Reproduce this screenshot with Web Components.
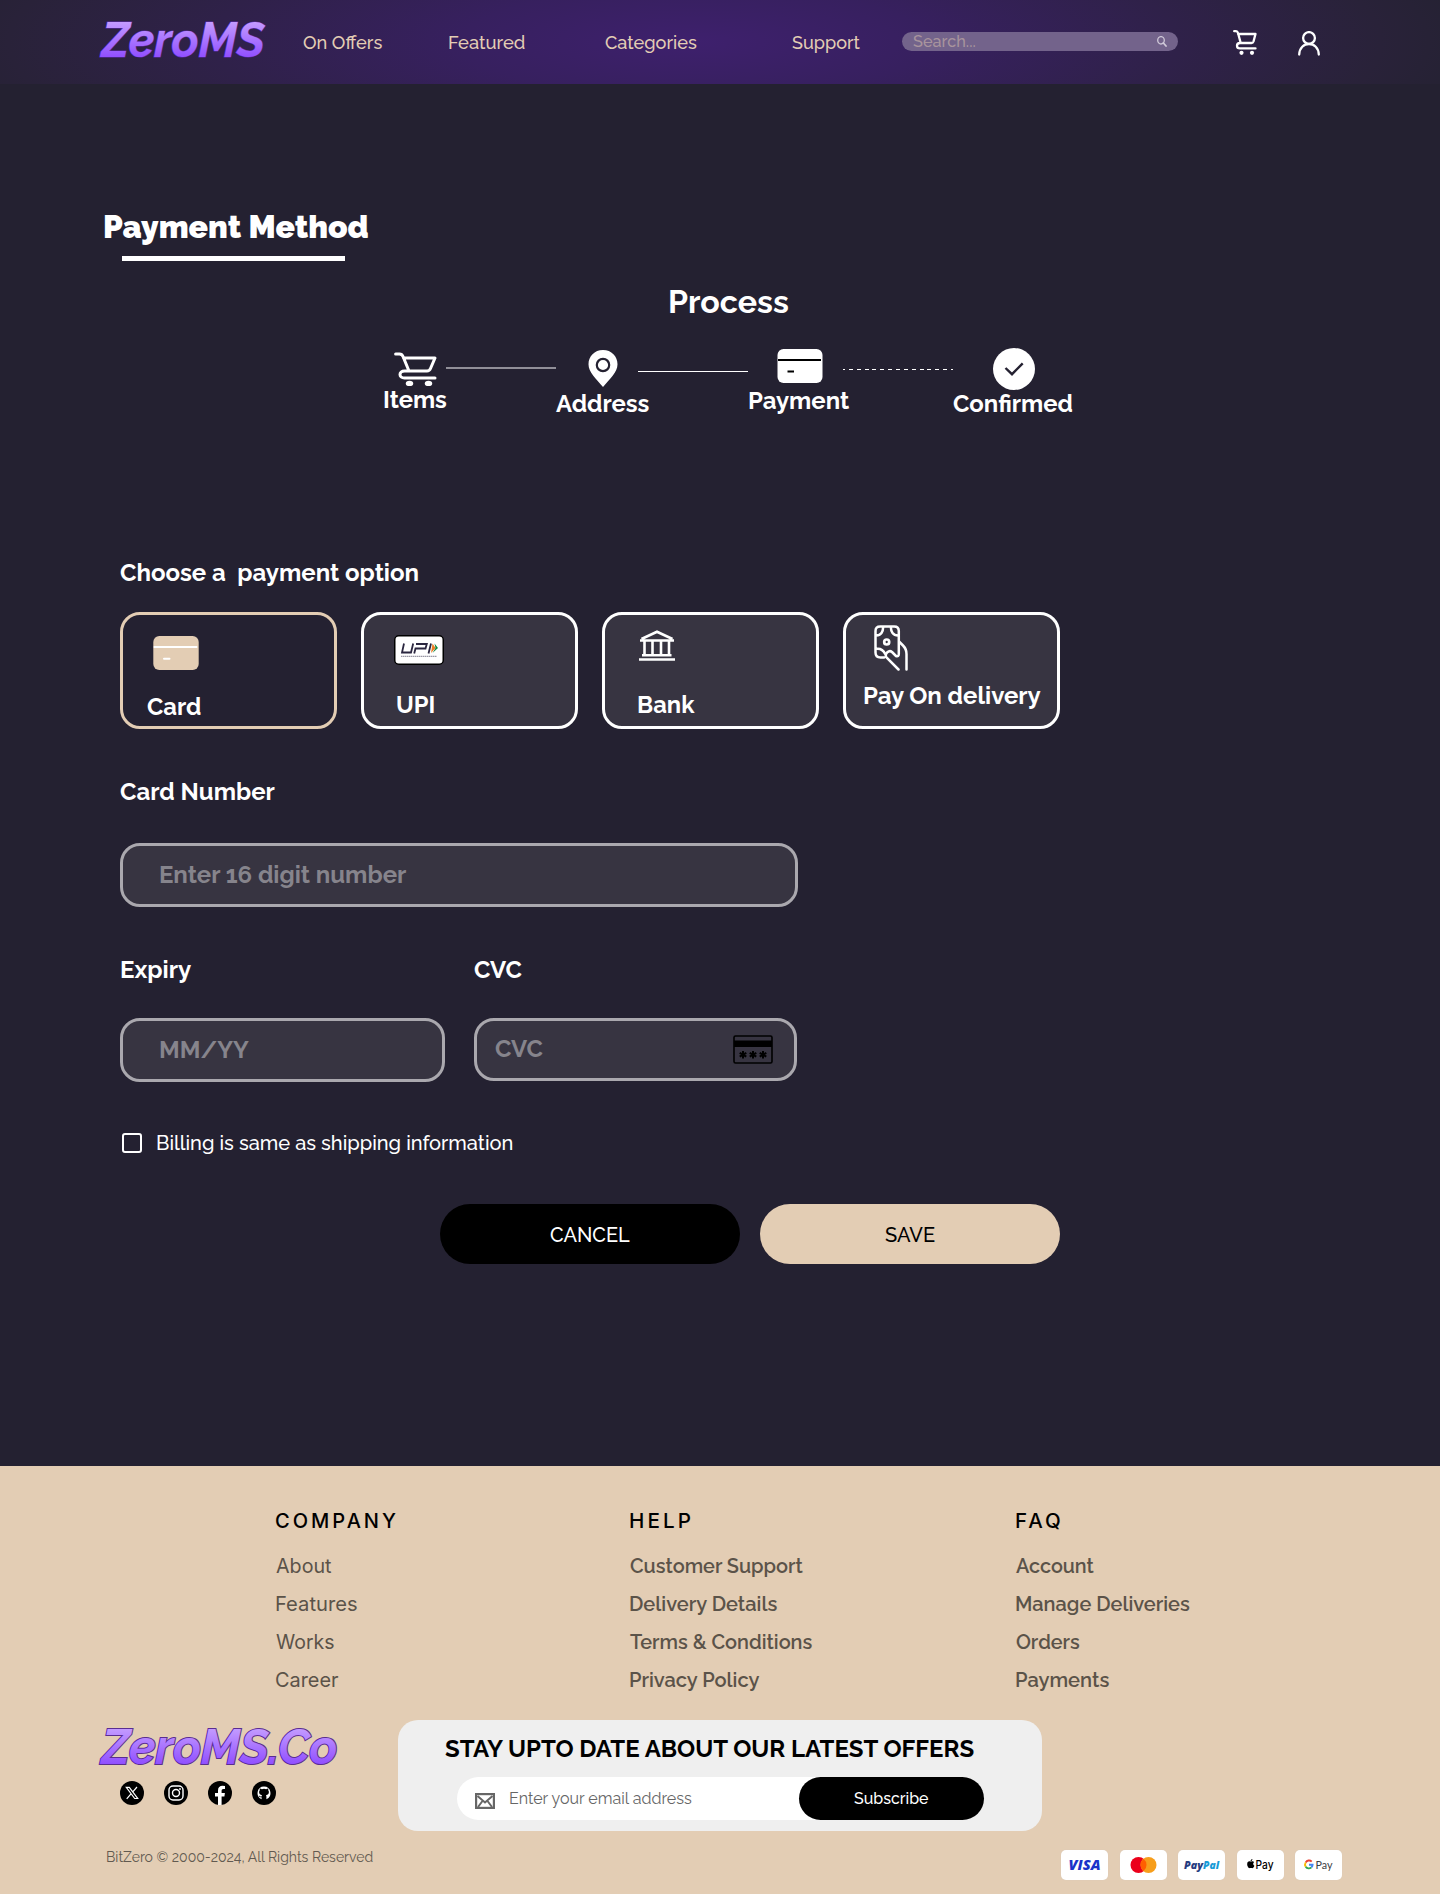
<!DOCTYPE html>
<html lang="en">
<head>
<meta charset="utf-8">
<title>ZeroMS – Payment Method</title>
<style>
  body { margin: 0; background: #242131; font-family: Raleway, Lato, "Open Sans", sans-serif; color: #fff; }
</style>
</head>
<body>
<payment-page></payment-page>
<script>
const define = (name, html, after) => {
  const tpl = document.createElement('template');
  tpl.innerHTML = html;
  customElements.define(name, class extends HTMLElement {
    connectedCallback() {
      if (this.shadowRoot) return;
      this.attachShadow({ mode: 'open' }).appendChild(tpl.content.cloneNode(true));
      if (after) after.call(this, this.shadowRoot);
    }
  });
};

/* A single line of text set to an exact drawn width. The baseline sits `size` px below the top. */
const pen = document.createElement('canvas').getContext('2d');
define('fit-text', `<style>
    :host { display: block; flex: none; }
    span { display: inline-block; white-space: pre; transform-origin: 0 0; vertical-align: top; }
    b { display: inline-block; width: 0; height: 0; }
  </style><span><slot></slot><b></b></span>`, function (root) {
  const size = +this.getAttribute('size') || 24;
  const width = +this.getAttribute('w');
  this.style.fontSize = size + 'px';
  this.style.fontWeight = this.getAttribute('weight') || 700;
  this.style.lineHeight = this.style.height = Math.ceil(size * 1.25) + 'px';
  this.style.width = width + 'px';
  const span = root.querySelector('span');
  const cs = getComputedStyle(this);
  pen.font = `${cs.fontWeight} ${size}px ${cs.fontFamily}`;
  const m = pen.measureText(this.textContent);
  const left = -m.actualBoundingBoxLeft;
  const right = m.width - m.actualBoundingBoxRight;
  const track = parseFloat(cs.letterSpacing) || 0;
  const box = span.getBoundingClientRect();
  const k = width / (box.width - left - right - track);
  const drop = Math.round(size - (root.querySelector('b').getBoundingClientRect().bottom - box.top));
  span.style.transform = `translateY(${drop}px) scaleX(${k}) translateX(${-left}px)`;
});

define('brand-logo', `
  <style>
    :host { display: block; flex: none; height: 50px; }
    svg { display: block; overflow: visible; }
    text { font: italic 700 48px Raleway, sans-serif; fill: url(#g); stroke: #5b2aa5; stroke-width: 1px; paint-order: stroke; }
  </style>
  <svg height="50"><defs><linearGradient id="g" gradientUnits="userSpaceOnUse" x1="0" y1="6" x2="0" y2="42">
    <stop offset="0" stop-color="#c39bff"/><stop offset="1" stop-color="#8f4dff"/></linearGradient></defs>
    <text x="1.500" y="40.500" lengthAdjust="spacingAndGlyphs"></text></svg>`, function (root) {
  const w = this.getAttribute('w');
  const t = root.querySelector('text');
  t.textContent = this.getAttribute('name');
  t.setAttribute('textLength', w - 2);
  root.querySelector('svg').setAttribute('width', w);
  this.style.width = w + 'px';
  if (this.hasAttribute('outlined')) { t.style.strokeWidth = '2px'; t.style.stroke = '#5a2d91'; }
});

const ICONS = {
  cart: ['0 0 43 34', `<g fill="none" stroke="#fff" stroke-width="3" stroke-linecap="round" stroke-linejoin="round"><path d="M1.600 2H5.500Q8 2 9 4.500L15 19M9.500 6H41L36.500 16.500Q35.500 19 33 19H10.500C4.500 19 4.500 26 10.500 26H41"/></g><ellipse cx="15.500" cy="31.400" rx="3.700" ry="2.600" fill="#fff"/><ellipse cx="34.500" cy="31.400" rx="3.700" ry="2.600" fill="#fff"/>`],
  navcart: ['0 0 24 25', `<path d="M1.200 1.200H3Q4.500 1.200 5 3L7.700 13M5 4H22.500L20.500 11.500Q20 13 18.500 13H7C3 13 3 18.400 7 18.400H22.500" fill="none" stroke="#fff" stroke-width="2.300" stroke-linecap="round" stroke-linejoin="round"/><circle cx="8.500" cy="22.800" r="2.100" fill="#fff"/><circle cx="19" cy="22.800" r="2.100" fill="#fff"/>`],
  user: ['0 0 22 25', `<g fill="none" stroke="#fff" stroke-width="2.300" stroke-linecap="round"><ellipse cx="11" cy="7" rx="5.900" ry="5.900"/><path d="M1.200 23.500C1.500 17 5.800 13 11 13S20.500 17 20.800 23.500"/></g>`],
  search: ['0 0 10 11', `<g fill="none" stroke="#cfc8d8" stroke-width="1.300" stroke-linecap="round"><ellipse cx="4" cy="4.300" rx="3.300" ry="3.700"/><path d="M6.400 7L9 10" stroke-width="1.800"/></g>`],
  pin: ['0 0 30 37', `<path d="M15 0C6.500 0 .5 6.300.5 14.200.5 22.500 8 28.500 15 37 22 28.500 29.500 22.500 29.500 14.200 29.500 6.300 23.500 0 15 0Z" fill="#fff"/><circle cx="15" cy="15" r="6.200" fill="#fff" stroke="#242131" stroke-width="2.200"/>`],
  card: ['0 0 46 34', `<rect x=".5" width="45" height="34" rx="6" fill="#fff"/><path d="M1 11H44M10.500 22.500H17" stroke="#000" stroke-width="1.800"/>`],
  cardtan: ['0 0 46 34', `<rect x=".3" width="45.400" height="34" rx="6" fill="#e3cdb4"/><path d="M1.500 11H43.500M11 22.700H16.500" stroke="#fff" stroke-width="2" stroke-linecap="round"/>`],
  check: ['0 0 42 42', `<circle cx="21" cy="21" r="21" fill="#fff"/><path d="M12.500 20L19 26.200 29.700 15.400" fill="none" stroke="#242131" stroke-width="2.400"/>`],
  upi: ['0 0 50 30', `<rect x=".75" y=".75" width="48.500" height="28.500" rx="4" fill="#fff" stroke="#000" stroke-width="1.500"/><g fill="none" stroke="#2b2740" stroke-width="1.800"><path d="M10 8.500L8 17.500H17L19.200 8.500M20.200 18.500L21.500 13.500H31.500L32.800 9H22M37 8.500L34.500 18.500"/></g><path d="M38.500 8.500L41.500 13 37 18Z" fill="#ee7b22"/><path d="M40.500 8.500L44 13 38.500 18 41.500 13Z" fill="#128a42"/><path d="M7 21.300H42.500" stroke="#9a98a5" stroke-width="1.300" stroke-dasharray="1.500 .5"/>`],
  bank: ['0 0 36 31', `<g fill="none" stroke="#fff" stroke-width="2.600"><path d="M2.500 9L18 1.700 33.500 9M1 10.500H35M5.500 11V25M13.500 11V25M22 11V25M30 11V25M3 25.300H32.500M0 29.500H36"/></g>`],
  hand: ['0 0 34 46', `<g fill="none" stroke="#fff" stroke-width="2.500" stroke-linecap="round" stroke-linejoin="round"><path d="M10 32.500H6.500Q1.500 32.500 1.500 27.500V6Q1.500 1.400 6.300 1.400H20.200Q24.800 1.400 24.800 6V29Q24.800 32 22 31L18 27C15 24.500 10.500 28.500 12.200 32.200L24.500 44.500M1.500 10.500C7 11 9.500 6.500 9 1.500M24.800 10.500C19 11 16.500 6.500 17 1.500M1.500 24C6 23 9.500 25.500 11.200 29M25 16.500L29 20.500Q32.500 24 32.500 29V44.500"/><circle cx="12.700" cy="17" r="2.500" stroke-width="2.700"/></g>`],
  cvc: ['0 0 40 29', `<rect x="1" y="1" width="38" height="27" rx="1.500" fill="none" stroke="#000" stroke-width="1.600"/><path d="M1 8.800H39" stroke="#000" stroke-width="6.500"/><path d="M10 16V23.500M6.700 17.800L13.300 21.700M13.300 17.800L6.700 21.700M20 16V23.500M16.700 17.800L23.300 21.700M23.300 17.800L16.700 21.700M30 16V23.500M26.700 17.800L33.300 21.700M33.300 17.800L26.700 21.700" stroke="#000" stroke-width="2"/>`],
  mail: ['0 0 20 16', `<rect x="1" y="1" width="18" height="14" fill="none" stroke="#666" stroke-width="2.400"/><path d="M2.500 3L10 9.500 17.500 3M3 14L7.500 8M17 14L12.500 8" fill="none" stroke="#666" stroke-width="2"/>`],
  x: ['0 0 24 24', `<circle cx="12" cy="12" r="12"/><path d="M6.300 6.300H9.300L17.700 17.500H14.700ZM17 6L12.800 10.800M11 12.800L6.700 17.800" fill="none" stroke="#fff" stroke-width="1.200"/>`],
  instagram: ['0 0 24 24', `<circle cx="12" cy="12" r="12"/><g fill="none" stroke="#fff" stroke-width="1.400"><rect x="5" y="5" width="14" height="14" rx="4"/><circle cx="12" cy="12" r="3.500"/></g><circle cx="16" cy="8" r=".9" fill="#fff"/>`],
  facebook: ['0 0 24 24', `<circle cx="12" cy="12" r="12"/><path d="M10 24V15.500H7V12H10V9.400C10 6.400 11.800 4.800 14.500 4.800L17 5V8H15.500C14 8 13.600 8.900 13.600 9.800V12H16.900L16.400 15.500H13.600V24Z" fill="#fff"/>`],
  github: ['0 0 24 24', `<circle cx="12" cy="12" r="12"/><path d="M12 5.600a6.600 6.600 0 0 0-2.400 12.700v-2.100c-2 .4-2.400-.9-2.900-1.500 1.300-.2 1.300 1 2.900.7 0-.5.200-.8.500-1.100-2-.3-3-1.200-3-3.200 0-.8.300-1.400.7-1.900-.2-.6-.1-1.300.1-1.800.8 0 1.400.4 1.900.8a7 7 0 0 1 4.400 0c.5-.4 1.100-.8 1.900-.8.200.5.300 1.200.1 1.800.4.500.7 1.100.7 1.900 0 2-1 2.900-3 3.200.4.300.5.800.5 1.500v2.500A6.600 6.600 0 0 0 12 5.600Z" fill="#fff"/>`]
};
define('x-icon', `<style>:host{display:block;flex:none} svg{display:block;width:100%;height:100%}</style>`, function (root) {
  const [box, body] = ICONS[this.getAttribute('name')];
  const [, , w, h] = box.split(' ');
  this.style.width = w + 'px';
  this.style.height = h + 'px';
  root.innerHTML += `<svg viewBox="${box}" preserveAspectRatio="none">${body}</svg>`;
});

define('site-header', `
  <style>
    :host { display: flex; box-sizing: border-box; height: 84px; padding-left: 100px; align-items: flex-start;
      background: radial-gradient(ellipse 780px 180px at 695px 42px, #3e206d 0%, #37205f 30%, #2f2149 62%, #292239 88%, #252233 100%); color: #e3cdb4; }
    nav { display: flex; flex: none; padding-top: 31px; }
    .search { display: flex; flex: none; box-sizing: border-box; width: 276px; height: 19px; margin: 32px 0 0 42px; padding: 0 11px;
      border-radius: 10px; background: #73638b; justify-content: space-between; color: #a8949d; }
    .search fit-text { margin-top: -1px; }
    .search x-icon { margin-top: 4px; }
  </style>
  <brand-logo name="ZeroMS" w="165" style="margin-top:16px"></brand-logo>
  <nav>
    <fit-text size="18" weight="500" w="79.500" style="margin-left:37.500px">On Offers</fit-text>
    <fit-text size="18" weight="500" w="76" style="margin-left:66.500px">Featured</fit-text>
    <fit-text size="18" weight="500" w="92" style="margin-left:80.500px">Categories</fit-text>
    <fit-text size="18" weight="500" w="68.500" style="margin-left:94.500px">Support</fit-text>
  </nav>
  <div class="search"><fit-text size="16" weight="500" w="62.500">Search...</fit-text><x-icon name="search"></x-icon></div>
  <x-icon name="navcart" style="margin:30px 0 0 55px"></x-icon>
  <x-icon name="user" style="margin:31px 0 0 41px"></x-icon>`);

define('process-step', `
  <style>:host { display: flex; flex: none; flex-direction: column; }</style>
  <slot name="icon"></slot><slot></slot>`);

define('process-steps', `
  <style>
    :host { display: flex; height: 82px; margin: 27px 0 0 384px; align-items: flex-start; }
    i { display: block; flex: none; width: 110px; }
  </style>
  <process-step style="padding-top:4px"><x-icon slot="icon" name="cart" style="margin-left:10px"></x-icon>
    <fit-text w="63" style="margin-top:-2.500px">Items</fit-text></process-step>
  <i style="height:2px;background:#918f98;margin:19px 0 0 -1px"></i>
  <process-step style="padding-top:2px"><x-icon slot="icon" name="pin" style="margin-left:32px"></x-icon>
    <fit-text w="93.500" style="margin-top:1px">Address</fit-text></process-step>
  <i style="height:1px;background:#fff;margin:23px 0 0 -11.500px"></i>
  <process-step style="padding-top:1px;margin-left:1px"><x-icon slot="icon" name="card" style="margin-left:28px"></x-icon>
    <fit-text w="100" style="margin-top:2px">Payment</fit-text></process-step>
  <i style="height:1px;background:repeating-linear-gradient(90deg,#fff 0 2px,transparent 2px 5.857px,#fff 5.857px 7.857px);margin:21px 0 0 -6px"></i>
  <process-step><x-icon slot="icon" name="check" style="margin-left:40px"></x-icon>
    <fit-text w="119.500" style="margin-top:-2px">Confirmed</fit-text></process-step>`);

define('pay-option', `
  <style>
    :host { display: flex; flex: none; flex-direction: column; box-sizing: border-box; width: 217px; height: 117px;
      border: 3px solid #fff; border-radius: 20px; background: #373441; }
    :host([selected]) { border-color: #e3cdb4; background: transparent; }
  </style><slot></slot>`);

define('text-field', `
  <style>
    :host { display: flex; flex: none; box-sizing: border-box; height: 64px; border: 3px solid #aaa8ae; border-radius: 20px;
      background: #373441; color: #86848c; align-items: flex-start; }
  </style><slot></slot>`);

define('pill-button', `
  <style>
    :host { display: flex; flex: none; width: 300px; height: 60px; border-radius: 30px; justify-content: center; align-items: flex-start; box-sizing: border-box; padding-top: 18px; }
  </style><slot></slot>`);

define('payment-form', `
  <style>
    :host { display: block; padding: 127px 0 0 120px; }
    .row { display: flex; }
  </style>
  <fit-text w="298.500">Choose a  payment option</fit-text>
  <div class="row" style="gap:24px;margin-top:25px">
    <pay-option selected><x-icon name="cardtan" style="margin:21px 0 0 30px"></x-icon><fit-text w="54" style="margin:21px 0 0 24px">Card</fit-text></pay-option>
    <pay-option><x-icon name="upi" style="margin:20px 0 0 30px"></x-icon><fit-text w="37.500" style="margin:24px 0 0 33px">UPI</fit-text></pay-option>
    <pay-option><x-icon name="bank" style="margin:15px 0 0 34px"></x-icon><fit-text w="57" style="margin:28px 0 0 33px">Bank</fit-text></pay-option>
    <pay-option><x-icon name="hand" style="margin:10px 0 0 28px"></x-icon><fit-text w="176.500" style="margin:9px 0 0 18px">Pay On delivery</fit-text></pay-option>
  </div>
  <fit-text w="154.500" style="margin-top:47px">Card Number</fit-text>
  <text-field style="width:678px;margin-top:37px"><fit-text w="246" style="margin:13px 0 0 37px">Enter 16 digit number</fit-text></text-field>
  <div class="row" style="margin-top:47px"><fit-text w="70" style="margin-left:1px">Expiry</fit-text><fit-text w="48.500" style="margin-left:283px">CVC</fit-text></div>
  <div class="row" style="gap:29px;margin-top:34px">
    <text-field style="width:325px"><fit-text w="89" style="margin:13px 0 0 37px">MM/YY</fit-text></text-field>
    <text-field style="width:323px;height:63px"><fit-text w="48.500" style="margin:12px 0 0 18px">CVC</fit-text><x-icon name="cvc" style="margin:14px 0 0 189.500px"></x-icon></text-field>
  </div>
  <div class="row" style="margin-top:48px">
    <i style="box-sizing:border-box;width:20px;height:20px;border:2px solid #fff;border-radius:3px;margin:3px 15px 0 2px"></i>
    <fit-text size="20" weight="500" w="355.500">Billing is same as shipping information</fit-text>
  </div>
  <div class="row" style="gap:20px;margin:49px 0 0 320px">
    <pill-button style="background:#000"><fit-text size="20" weight="500" w="80">CANCEL</fit-text></pill-button>
    <pill-button style="background:#e3cdb4;color:#000"><fit-text size="20" weight="500" w="50">SAVE</fit-text></pill-button>
  </div>`);

define('link-column', `
  <style>
    :host { display: flex; flex: none; flex-direction: column; gap: 13px; color: #5b5349; }
    ::slotted([slot=head]) { color: #000; letter-spacing: 3px; font-family: Inter, sans-serif; margin-bottom: 7px; }
  </style><slot name="head"></slot><slot></slot>`);

define('news-letter', `
  <style>
    :host { display: flex; flex: none; flex-direction: column; box-sizing: border-box; width: 644px; height: 111px; border-radius: 20px;
      background: #efefef; color: #000; }
    .bar { display: flex; box-sizing: border-box; width: 527px; height: 43px; margin: 14px 0 0 59px; border-radius: 22px; background: #fff; color: #666; }
    .go { display: flex; box-sizing: border-box; width: 185px; padding-top: 11px; margin-left: auto; border-radius: 22px; background: #000; color: #fff; justify-content: center; }
  </style>
  <fit-text w="528.500" style="margin:13px 0 0 47px">STAY UPTO DATE ABOUT OUR LATEST OFFERS</fit-text>
  <div class="bar"><x-icon name="mail" style="margin:16px 0 0 18px"></x-icon>
    <fit-text size="16" weight="400" w="182" style="margin:11px 0 0 15px">Enter your email address</fit-text>
    <div class="go"><fit-text size="16" weight="500" w="75">Subscribe</fit-text></div></div>`);

define('pay-badges', `
  <style>
    :host { display: flex; gap: 11.500px; }
    svg { display: block; width: 47px; height: 30px; border-radius: 5px; background: #fff; flex: none; box-shadow: 0 0 1px #d5cabc; }
  </style>
  <svg><text x="7.500" y="20.200" textLength="32" lengthAdjust="spacingAndGlyphs" font-family="Open Sans" font-style="italic" font-weight="800" font-size="14" fill="#1a33c9">VISA</text></svg>
  <svg><circle cx="18.500" cy="15" r="8" fill="#eb001b"/><circle cx="28.500" cy="15" r="8" fill="#f79e1b"/><path d="M23.500 8.750a8 8 0 0 1 0 12.500a8 8 0 0 1 0-12.500" fill="#ff5f00"/></svg>
  <svg><g font-family="Open Sans" font-style="italic" font-weight="800" font-size="11"><text x="6" y="18.500" textLength="19" lengthAdjust="spacingAndGlyphs" fill="#253b80">Pay</text><text x="25" y="18.500" textLength="16" lengthAdjust="spacingAndGlyphs" fill="#179bd7">Pal</text></g></svg>
  <svg><path d="M14.300 11.600c1.100-.6 2.200-.2 2.800.5-1.400 1-1.100 3 .3 3.600-.6 1.500-1.500 2.800-2.700 2.400-.6-.3-1.100-.3-1.800 0-1.500.5-2.900-2.600-2.700-4.400.2-1.900 1.900-2.800 3.400-2.100.2.100.5.100.7 0ZM13.600 11c0-1.100.8-1.900 1.800-2.100.1 1.100-.7 2-1.800 2.100Z"/><text x="18.500" y="18.800" textLength="18" lengthAdjust="spacingAndGlyphs" font-family="Inter" font-weight="500" font-size="12">Pay</text></svg>
  <svg><g fill="none" stroke-width="1.900"><path d="M16.700 11.600A3.800 3.800 0 0 0 10.700 12.500" stroke="#ea4335"/><path d="M10.700 12.500A3.800 3.800 0 0 0 10.700 16.700" stroke="#fbbc04"/><path d="M10.700 16.700A3.800 3.800 0 0 0 16.400 17.400" stroke="#34a853"/><path d="M16.400 17.400A3.700 3.700 0 0 0 17.600 14.700H14" stroke="#4285f4"/></g><text x="20.500" y="18.800" textLength="17" lengthAdjust="spacingAndGlyphs" font-family="Lato" font-size="12" fill="#3c4043">Pay</text></svg>`);

define('site-footer', `
  <style>
    :host { display: block; box-sizing: border-box; height: 428px; padding-top: 42px; background: #e3cdb4; color: #5b5349; }
    .cols { display: grid; grid-template-columns: 353.500px 386.500px 1fr; padding-left: 276px; }
    .mid { display: flex; margin-top: 28px; padding-left: 100px; height: 111px; }
    .brand { width: 298px; flex: none; }
    .social { display: flex; gap: 20px; margin: 8px 0 0 20px; }
    .end { display: flex; margin-top: 16px; padding-left: 106.500px; }
    .inter { font-family: Inter, sans-serif; }
  </style>
  <div class="cols">
    <link-column><fit-text slot="head" size="20" weight="500" w="120">COMPANY</fit-text>
      <fit-text class="inter" size="20" weight="400" w="56">About</fit-text><fit-text class="inter" size="20" weight="400" w="81">Features</fit-text><fit-text class="inter" size="20" weight="400" w="58">Works</fit-text><fit-text class="inter" size="20" weight="400" w="63">Career</fit-text></link-column>
    <link-column><fit-text slot="head" size="20" weight="500" w="60">HELP</fit-text>
      <fit-text size="20" weight="600" w="173.500">Customer Support</fit-text><fit-text size="20" weight="600" w="147.500">Delivery Details</fit-text><fit-text size="20" weight="600" w="182.500">Terms &amp; Conditions</fit-text><fit-text size="20" weight="600" w="129.500">Privacy Policy</fit-text></link-column>
    <link-column><fit-text slot="head" size="20" weight="500" w="44.500">FAQ</fit-text>
      <fit-text size="20" weight="600" w="78.500">Account</fit-text><fit-text size="20" weight="600" w="174">Manage Deliveries</fit-text><fit-text size="20" weight="600" w="64">Orders</fit-text><fit-text size="20" weight="600" w="93.500">Payments</fit-text></link-column>
  </div>
  <div class="mid">
    <div class="brand"><brand-logo name="ZeroMS.Co" w="238" outlined style="padding-top:3px"></brand-logo>
      <div class="social"><x-icon name="x"></x-icon><x-icon name="instagram"></x-icon><x-icon name="facebook"></x-icon><x-icon name="github"></x-icon></div></div>
    <news-letter></news-letter>
  </div>
  <div class="end"><fit-text size="14" weight="400" w="265.500" style="color:#625a50;margin-top:.5px">BitZero © 2000-2024, All Rights Reserved</fit-text>
    <pay-badges style="margin:3px 0 0 689px"></pay-badges></div>`);

define('payment-page', `
  <style>
    :host { display: block; width: 1440px; }
    main { box-sizing: border-box; height: 1382px; padding-top: 122px; }
    hr { width: 223px; height: 5px; margin: 10px 0 0 122px; border: 0; background: #fff; }
  </style>
  <site-header></site-header>
  <main>
    <fit-text size="32" weight="900" w="264.500" style="margin-left:103.500px">Payment Method</fit-text>
    <hr>
    <fit-text size="32" w="118" style="margin:20px 0 0 669.500px">Process</fit-text>
    <process-steps></process-steps>
    <payment-form></payment-form>
  </main>
  <site-footer></site-footer>`);
</script>
</body>
</html>
